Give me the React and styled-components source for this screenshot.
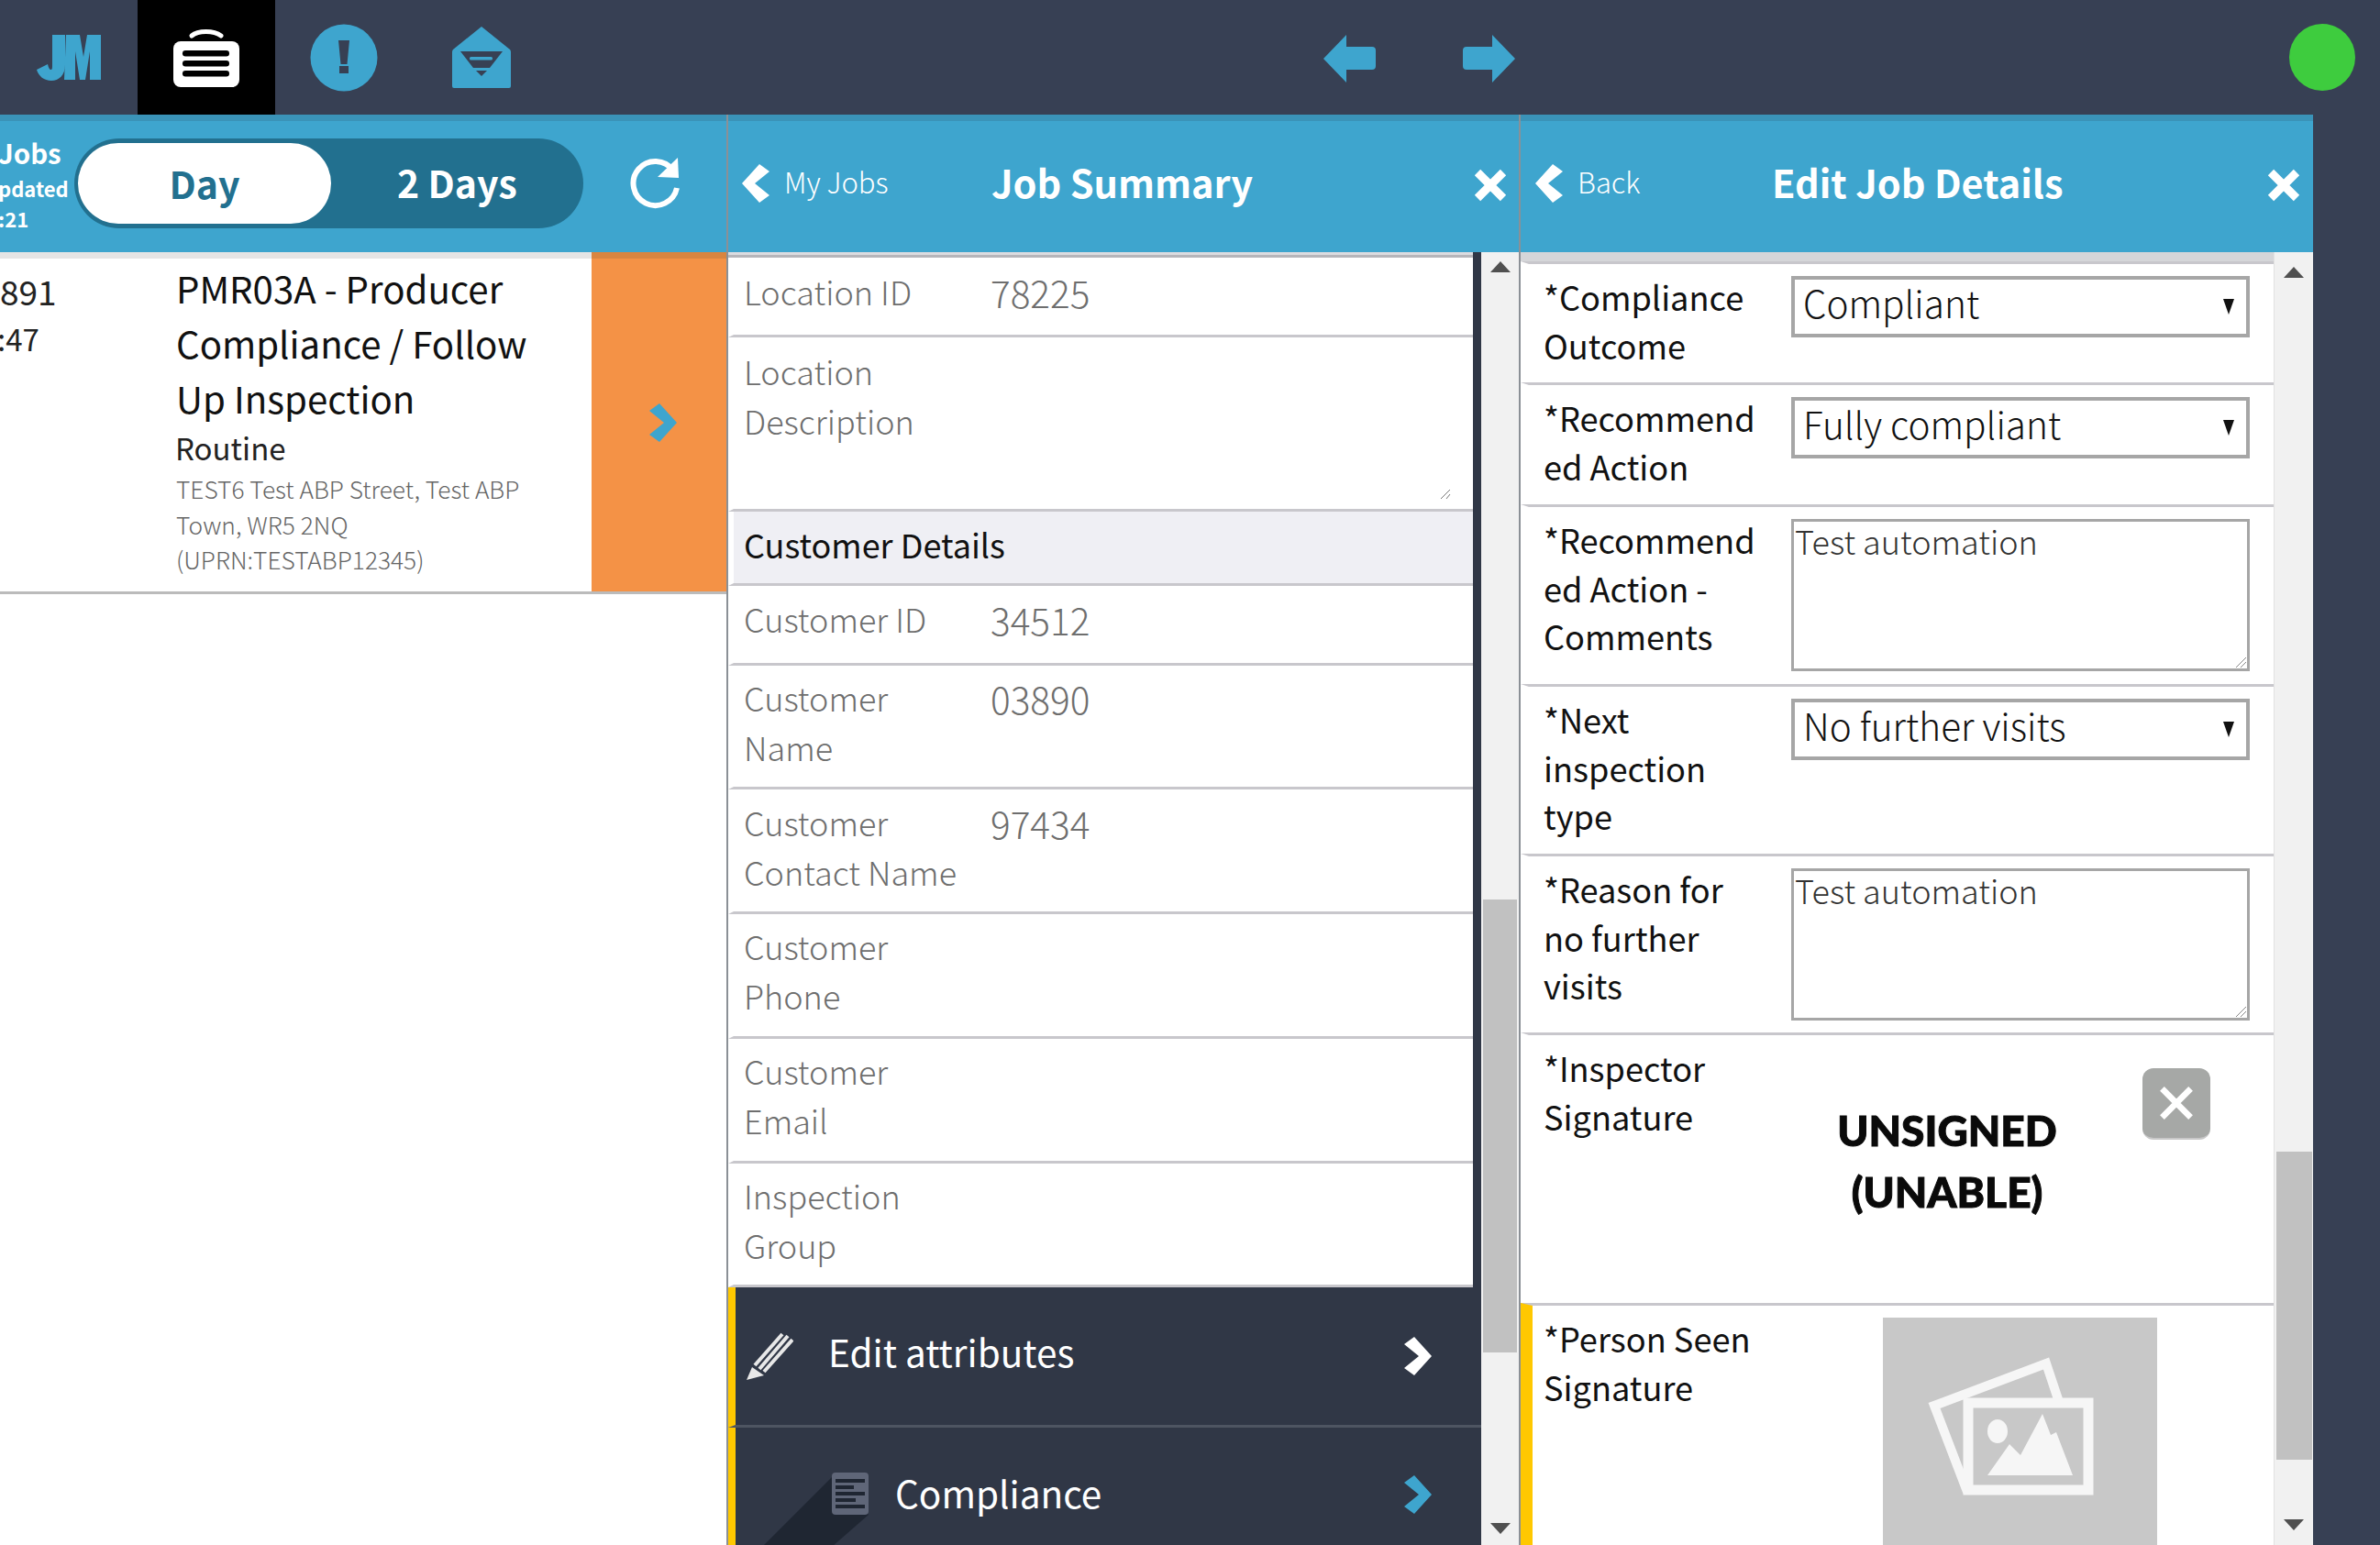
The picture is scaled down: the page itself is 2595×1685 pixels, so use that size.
import React from "react";
import styled, { createGlobalStyle } from "styled-components";

const Global = createGlobalStyle`
  html, body { margin: 0; padding: 0; background: #fff; overflow: hidden; }
  * { box-sizing: border-box; }
  body { font-family: "Noto Sans CJK SC", "Noto Sans", sans-serif; }
`;
const Page = styled.div`width: 2595px; height: 1685px; display: flex; flex-direction: column; overflow: hidden;`;
const TopBar = styled.header`height: 125px; flex: none; background: #374054; display: flex; align-items: stretch;`;
const NavCell = styled.div`width: 150px; height: 125px; flex: none; display: flex; align-items: center; justify-content: center; background: ${p => p.$active ? "#000" : "transparent"};`;
const ArrowGroup = styled.div`display: flex; gap: 95px; margin-left: 843px; margin-top: 3px; align-items: center;`;
const Status = styled.div`width: 72px; height: 73px; border-radius: 50%; background: #3ecc3e; margin-left: 844px; align-self: center;`;
const Panels = styled.div`flex: 1; display: flex; background: #374054; min-height: 0; border-top: 0;`;
const Panel = styled.section`width: ${p => p.$w}px; flex: none; background: #fff; display: flex; flex-direction: column; border-right: ${p => p.$edge ? "2px solid #8b9096" : "none"}; overflow: hidden;`;
const Header = styled.div`height: 150px; flex: none; background: #3ea5ce; border-top: 7px solid #3a93b8; padding-bottom: 8px; display: flex; align-items: center; color: #fff; position: relative;`;
const JobsInfo = styled.div`width: 83px; flex: none; margin-left: -2px; line-height: 1; white-space: nowrap; display: flex; flex-direction: column; gap: 7px; color: #fff;`;
const JobsTitle = styled.div`font-size: 29.500px; line-height: 36px; font-weight: 700; margin-bottom: 1px;`;
const JobsSmall = styled.div`font-size: 22px; line-height: 26px; font-weight: 700;`;
const Toggle = styled.div`width: 555px; height: 98px; border-radius: 49px; background: #22708f; display: flex; align-items: center; padding-left: 4px;`;
const ToggleOn = styled.div`width: 276px; height: 88px; border-radius: 44px; background: #fff; color: #22708f; font-size: 41px; line-height: 60px; font-weight: 700; display: flex; align-items: center; justify-content: center; padding-bottom: 2px;`;
const ToggleOff = styled.div`flex: 1; color: #fff; font-size: 41px; line-height: 60px; font-weight: 700; text-align: center; padding-bottom: 4px;`;
const Refresh = styled.div`margin-left: 51px; display: flex;`;
const BackArea = styled.div`display: flex; align-items: center; gap: 16px; width: ${p => p.$w}px; padding-left: ${p => p.$pl}px; flex: none;`;
const BackText = styled.span`font-size: 31px; line-height: 44px; font-weight: 300; margin-bottom: 3px;`;
const Title = styled.div`font-size: 41.500px; line-height: 60px; font-weight: 700; white-space: nowrap; flex: 1; margin-bottom: 4px;`;
const Close = styled.div`display: flex; flex: none; margin-right: ${p => p.$mr}px; margin-top: 4px;`;

const JobRow = styled.div`display: flex; height: 373px; border-bottom: 3px solid #bbb; flex: none;`;
const JobMain = styled.div`flex: 1; border-top: 7px solid #e5e5e5; display: flex; min-width: 0;`;
const JobIds = styled.div`width: 192px; flex: none; padding-top: 7px; color: #222;`;
const JobId = styled.div`font-size: 37px; line-height: 56px;`;
const JobTime = styled.div`font-size: 33px; line-height: 50px; margin-left: -3px; margin-top: -1px;`;
const JobBody = styled.div`flex: 1; padding-top: 2px;`;
const JobTitle = styled.div`font-size: 40.200px; line-height: 60px; color: #111;`;
const JobType = styled.div`font-size: 33px; line-height: 50px; color: #222; margin-top: -1px; margin-left: -1px;`;
const JobAddr = styled.div`font-size: 26.300px; line-height: 38.500px; color: #666; font-weight: 300; margin-top: 1px;`;
const JobGo = styled.div`width: 147px; flex: none; background: #f49246; border-top: 7px solid #d98540; display: flex; align-items: center; justify-content: center; padding-left: 9px; padding-bottom: 5px;`;

const Body = styled.div`flex: 1; display: flex; min-height: 0;`;
const Scroll = styled.div`flex: 1; min-width: 0; background: ${p => p.$dark ? "#303746" : "#fff"}; display: flex; flex-direction: column; overflow: hidden;`;
const Strip = styled.div`height: ${p => p.$h}px; flex: none; width: ${p => p.$w ? p.$w + "px" : "100%"}; background: #dcdce0; border-bottom: 3px solid ${p => p.$line};`;
const InfoRow = styled.div`width: 812px; flex: none; background: #fff; border-left: 6px solid #fff; border-bottom: 3px solid #c8c7cc; padding: ${p => p.$pt}px 0 0 11px; height: ${p => p.$h}px; display: flex; position: relative;`;
const InfoLabel = styled.div`width: 269px; flex: none; font-size: 36px; line-height: 54px; color: #6e6e6e; font-weight: 300; white-space: nowrap;`;
const InfoValue = styled.div`font-size: 40.500px; line-height: 54px; color: #6e6e6e; font-weight: 300; margin-top: 2px;`;
const Handle = styled.svg`position: absolute; right: 24px; bottom: 11px;`;
const SectionRow = styled.div`width: 812px; height: 81px; flex: none; background: #efeff4; border-left: 6px solid #fff; border-bottom: 3px solid #c8c7cc; padding-left: 11px; font-size: 36px; line-height: 71px; color: #111;`;
const ActionRow = styled.div`height: ${p => p.$h}px; flex: none; background: #303746; border-left: 8px solid #ffc800; border-bottom: ${p => p.$line ? "3px solid #4e5562" : "0"}; display: flex; align-items: ${p => p.$line ? "center" : "flex-start"}; color: #fff; font-size: 40.500px; padding-left: ${p => p.$pl}px; padding-top: ${p => p.$pt || 0}px;`;
const ActionText = styled.span`margin-left: ${p => p.$ml}px; flex: 1; line-height: 56px; position: relative; top: ${p => p.$top}px;`;
const ActionChevron = styled.div`margin-right: ${p => p.$mr}px; display: flex; margin-top: ${p => p.$mt || 0}px;`;
const ActionIcon = styled.svg`overflow: visible; flex: none; display: block;`;
const Pencil = styled.svg`flex: none; display: block;`;

const Bar = styled.div`width: ${p => p.$w}px; flex: none; background: #f1f1f1; display: flex; flex-direction: column; align-items: center; border-left: ${p => p.$line ? "1px solid #e2e2e2" : "0"}; overflow: hidden;`;
const TriUp = styled.div`width: 0; height: 0; border-left: 11px solid transparent; border-right: 11px solid transparent; border-bottom: 12px solid #505050; margin-top: ${p => p.$mt}px; flex: none;`;
const TriDown = styled.div`width: 0; height: 0; border-left: 11px solid transparent; border-right: 11px solid transparent; border-top: 12px solid #505050; margin-bottom: ${p => p.$mb}px; flex: none; margin-top: auto;`;
const Thumb = styled.div`width: ${p => p.$w}px; height: ${p => p.$h}px; margin-top: ${p => p.$mt}px; background: #c1c1c1; flex: none;`;

const FormStrip = styled.div`height: 10px; flex: none; background: #d5d6d9;`;
const FormRow = styled.div`display: flex; flex: none; background: #fff; border-top: 3px solid #c8c7cc; border-left: ${p => p.$req ? "13px solid #ffc800" : "9px solid #fff"}; height: ${p => p.$h}px; padding: 13px 0 0 ${p => p.$req ? 12 : 16}px; position: relative;`;
const FormLabel = styled.div`width: 269px; flex: none; font-size: 36.200px; line-height: 52.500px; color: #111; margin-top: -4px; white-space: nowrap;`;
const SelectBox = styled.div`width: 500px; height: 67px; border: 4px solid #a6a6a6; background: #fff; display: flex; align-items: center; justify-content: space-between; padding: 0 13px 10px 9px; margin-left: 1px; font-size: 40.500px; font-weight: 300; color: #111;`;
const Caret = styled.span`width: 0; height: 0; border-left: 6.500px solid transparent; border-right: 6.500px solid transparent; border-top: 17px solid #111; margin-top: 10px;`;
const TextBox = styled.div`width: 500px; height: 166px; margin-left: 1px; border: 3px solid #a6a6a6; background: #fff; padding: 0 1px; font-size: 36px; line-height: 40px; color: #333; font-weight: 300; position: relative;`;
const BoxHandle = styled.svg`position: absolute; right: 1px; bottom: 1px;`;
const Sig = styled.div`width: 320px; margin-left: 11px; margin-top: 57px; text-align: center; font-family: Lato, sans-serif; font-weight: 900; font-size: 46px; line-height: 67px; color: #0a0a0a; -webkit-text-stroke: 1px #0a0a0a; filter: blur(.5px);`;
const SigClear = styled.div`width: 74px; height: 78px; border-radius: 12px; background: #a6a8a6; border-bottom: 2px solid #c8c8c8; position: absolute; left: 669px; top: 36px; display: flex; align-items: center; justify-content: center;`;
const Photo = styled.div`width: 299px; height: 250px; background: #c8c8c8; margin-left: 101px; flex: none;`;

const Chev = ({ dir = "right", color = "#fff", w = 30, h = 42 }) => (
  <svg width={w} height={h} viewBox="0 0 30 42" style={{ display: "block" }}>
    <polygon fill={color} points={dir === "left" ? "19,0 30,8 14,21 30,34 19,42 0,21" : "11,0 30,21 11,42 0,34 16,21 0,8"} />
  </svg>
);
const XIcon = ({ s = 36, color = "#fff", sw = 9 }) => (
  <svg width={s} height={s} viewBox="0 0 36 36" style={{ display: "block" }}>
    <path d="M4 4 L32 32 M32 4 L4 32" stroke={color} strokeWidth={sw} fill="none" />
  </svg>
);
const ResizeMark = () => (
  <BoxHandle width="12" height="12" viewBox="0 0 12 12"><path d="M1 12L12 1M6 12L12 6" stroke="#888" strokeWidth="1" /></BoxHandle>
);

export default function App() {
  return (
    <Page>
      <Global />
      <TopBar>
        <NavCell>
          <svg width="70" height="50" viewBox="0 0 70 50">
            <path fill="#3ea5ce" d="M17 0H31V33C31 44 24 50 16 50C8 50 2 45 0 38L12 32C13 36 14 38 15.500 38C17 38 17 36 17 33Z" />
            <path fill="#3ea5ce" d="M32 0H47L51 24L55 0H70V49H58V18L53 49H47L42 18V49H30Z" />
          </svg>
        </NavCell>
        <NavCell $active>
          <svg width="74" height="66" viewBox="0 0 74 66">
            <path d="M21 9 C28 3 45 3 53 9" stroke="#fff" strokeWidth="5" strokeLinecap="round" fill="none" />
            <rect x="1" y="15" width="72" height="50" rx="8" fill="#fff" />
            <rect x="11" y="25" width="51" height="6.500" rx="3.200" fill="#000" />
            <rect x="11" y="36" width="51" height="6.500" rx="3.200" fill="#000" />
            <rect x="11" y="47" width="51" height="6.500" rx="3.200" fill="#000" />
          </svg>
        </NavCell>
        <NavCell>
          <svg width="74" height="74" viewBox="0 0 74 74">
            <circle cx="37" cy="37" r="36.500" fill="#3ea5ce" />
            <path fill="#374054" d="M31 18H43L40.500 44H33.500ZM32 46H42V54H32Z" />
          </svg>
        </NavCell>
        <NavCell>
          <svg width="66" height="68" viewBox="0 0 66 68">
            <path fill="#3ea5ce" d="M33 0L64 25Q65 26 65 28V65Q65 67 63 67H3Q1 67 1 65V28Q1 26 2 25Z" />
            <path fill="#374054" d="M10 27H56L42 45H24Z" />
            <rect x="20" y="33" width="25" height="3.500" rx="1.500" fill="#3ea5ce" />
            <path fill="#374054" d="M27 48H39L33 54Z" />
          </svg>
        </NavCell>
        <ArrowGroup>
          <svg width="57" height="53" viewBox="0 0 57 53">
            <path fill="#3ea5ce" d="M25 0L0 26L25 52V38H53Q57 38 57 34V17Q57 13 53 13H25Z" />
          </svg>
          <svg width="57" height="53" viewBox="0 0 57 53">
            <path fill="#3ea5ce" d="M32 0L57 26L32 52V38H4Q0 38 0 34V17Q0 13 4 13H32Z" />
          </svg>
        </ArrowGroup>
        <Status />
      </TopBar>
      <Panels>
        <Panel $w={794} $edge>
          <Header>
            <JobsInfo>
              <JobsTitle>Jobs</JobsTitle>
              <JobsSmall>pdated</JobsSmall>
              <JobsSmall>:21</JobsSmall>
            </JobsInfo>
            <Toggle>
              <ToggleOn>Day</ToggleOn>
              <ToggleOff>2 Days</ToggleOff>
            </Toggle>
            <Refresh>
              <svg width="56" height="56" viewBox="0 0 56 56" fill="none">
                <path d="M47 14 A24 24 0 1 0 51 33" stroke="#fff" strokeWidth="6" />
                <path fill="#fff" d="M30 21L53 22L52 0Z" />
              </svg>
            </Refresh>
          </Header>
          <JobRow>
            <JobMain>
              <JobIds>
                <JobId>891</JobId>
                <JobTime>:47</JobTime>
              </JobIds>
              <JobBody>
                <JobTitle>PMR03A - Producer<br />Compliance / Follow<br />Up Inspection</JobTitle>
                <JobType>Routine</JobType>
                <JobAddr>TEST6 Test ABP Street, Test ABP<br />Town, WR5 2NQ<br />(UPRN:TESTABP12345)</JobAddr>
              </JobBody>
            </JobMain>
            <JobGo><Chev color="#3ea5ce" /></JobGo>
          </JobRow>
        </Panel>

        <Panel $w={864} $edge>
          <Header>
            <BackArea $w={287} $pl={15}>
              <Chev dir="left" />
              <BackText>My Jobs</BackText>
            </BackArea>
            <Title>Job Summary</Title>
            <Close $mr={13}><XIcon /></Close>
          </Header>
          <Body>
            <Scroll $dark>
              <Strip $h={6} $w={812} $line="#b5b5ba" />
              <InfoRow $h={87} $pt={9}>
                <InfoLabel>Location ID</InfoLabel>
                <InfoValue>78225</InfoValue>
              </InfoRow>
              <InfoRow $h={190} $pt={9}>
                <InfoLabel>Location<br />Description</InfoLabel>
                <Handle width="12" height="10" viewBox="0 0 12 10"><path d="M1 10L11 0M7 10L11 5" stroke="#777" strokeWidth="1" /></Handle>
              </InfoRow>
              <SectionRow>Customer Details</SectionRow>
              <InfoRow $h={87} $pt={8}>
                <InfoLabel>Customer ID</InfoLabel>
                <InfoValue>34512</InfoValue>
              </InfoRow>
              <InfoRow $h={135} $pt={7}>
                <InfoLabel>Customer<br />Name</InfoLabel>
                <InfoValue>03890</InfoValue>
              </InfoRow>
              <InfoRow $h={136} $pt={8}>
                <InfoLabel>Customer<br />Contact Name</InfoLabel>
                <InfoValue>97434</InfoValue>
              </InfoRow>
              <InfoRow $h={136} $pt={7}>
                <InfoLabel>Customer<br />Phone</InfoLabel>
              </InfoRow>
              <InfoRow $h={136} $pt={7}>
                <InfoLabel>Customer<br />Email</InfoLabel>
              </InfoRow>
              <InfoRow $h={135} $pt={7}>
                <InfoLabel>Inspection<br />Group</InfoLabel>
              </InfoRow>
              <ActionRow $h={153} $pl={11} $line>
                <Pencil width="52" height="52" viewBox="0 0 52 52">
                  <path d="M10 36L40 2M15 40L46 4M20 43L51 8" stroke="#e8e8e8" strokeWidth="4" fill="none" />
                  <path d="M7 38L20 47L1 52Z" fill="#e8e8e8" />
                </Pencil>
                <ActionText $ml={38} $top={-5}>Edit attributes</ActionText>
                <ActionChevron $mr={54}><Chev /></ActionChevron>
              </ActionRow>
              <ActionRow $h={200} $pl={105} $pt={49}>
                <ActionIcon width="40" height="46" viewBox="0 0 40 46">
                  <polygon fill="#1f2632" points="0,5 -76,81 0,81 40,46" />
                  <rect x="0" y="0" width="40" height="46" rx="4" fill="#5f6678" />
                  <rect x="4" y="7" width="32" height="4" fill="#1f2632" />
                  <rect x="4" y="14" width="20" height="4" fill="#1f2632" />
                  <rect x="4" y="21" width="32" height="4" fill="#1f2632" />
                  <rect x="4" y="28" width="22" height="4" fill="#1f2632" />
                  <rect x="4" y="35" width="32" height="4" fill="#1f2632" />
                </ActionIcon>
                <ActionText $ml={29} $top={-6}>Compliance</ActionText>
                <ActionChevron $mr={54} $mt={3}><Chev color="#3ea5ce" /></ActionChevron>
              </ActionRow>
            </Scroll>
            <Bar $w={41}>
              <TriUp $mt={10} />
              <Thumb $w={37} $h={494} $mt={684} />
              <TriDown $mb={12} />
            </Bar>
          </Body>
        </Panel>

        <Panel $w={864}>
          <Header>
            <BackArea $w={274} $pl={16}>
              <Chev dir="left" />
              <BackText>Back</BackText>
            </BackArea>
            <Title>Edit Job Details</Title>
            <Close $mr={14}><XIcon /></Close>
          </Header>
          <Body>
            <Scroll>
              <FormStrip />
              <FormRow $h={132}>
                <FormLabel>*Compliance<br />Outcome</FormLabel>
                <SelectBox>Compliant<Caret /></SelectBox>
              </FormRow>
              <FormRow $h={133}>
                <FormLabel>*Recommend<br />ed Action</FormLabel>
                <SelectBox>Fully compliant<Caret /></SelectBox>
              </FormRow>
              <FormRow $h={196}>
                <FormLabel>*Recommend<br />ed Action -<br />Comments</FormLabel>
                <TextBox>Test automation<ResizeMark /></TextBox>
              </FormRow>
              <FormRow $h={185}>
                <FormLabel>*Next<br />inspection<br />type</FormLabel>
                <SelectBox>No further visits<Caret /></SelectBox>
              </FormRow>
              <FormRow $h={195}>
                <FormLabel>*Reason for<br />no further<br />visits</FormLabel>
                <TextBox>Test automation<ResizeMark /></TextBox>
              </FormRow>
              <FormRow $h={295}>
                <FormLabel>*Inspector<br />Signature</FormLabel>
                <Sig>UNSIGNED<br />(UNABLE)</Sig>
                <SigClear><XIcon s={40} sw={6} /></SigClear>
              </FormRow>
              <FormRow $h={270} $req>
                <FormLabel>*Person Seen<br />Signature</FormLabel>
                <Photo>
                  <svg width="299" height="250" viewBox="0 0 299 250">
                    <polyline points="92,190 56,96 178,50 192,92" fill="none" stroke="#f6f6f6" strokeWidth="10" />
                    <rect x="93" y="93" width="131" height="95" fill="#c8c8c8" stroke="#f6f6f6" strokeWidth="11" />
                    <ellipse cx="125" cy="124" rx="11" ry="13" fill="#f6f6f6" />
                    <path fill="#f6f6f6" d="M114 172L138 138L150 150L174 105L183 128L189 125L207 172Z" />
                  </svg>
                </Photo>
              </FormRow>
            </Scroll>
            <Bar $w={43} $line>
              <TriUp $mt={16} />
              <Thumb $w={39} $h={336} $mt={953} />
              <TriDown $mb={16} />
            </Bar>
          </Body>
        </Panel>
      </Panels>
    </Page>
  );
}
